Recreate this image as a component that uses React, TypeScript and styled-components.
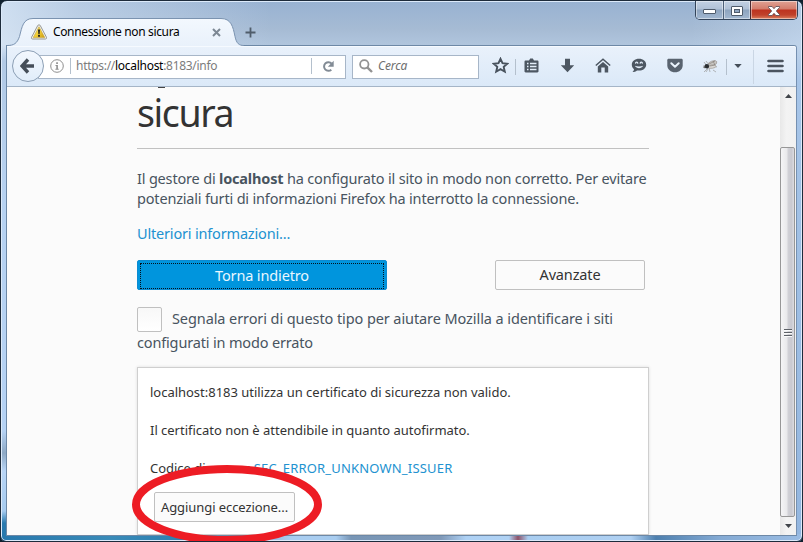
import React from "react";
import styled, { createGlobalStyle } from "styled-components";

const GlobalStyle = createGlobalStyle`
  *, *::before, *::after { box-sizing: border-box; }
  body { margin: 0; overflow: hidden; background: #10202e; font-family: "Noto Sans", "Open Sans", sans-serif; }
  button, p, h1 { margin: 0; padding: 0; font-family: inherit; font-weight: 400; }
  svg { display: block; flex: none; }
`;

const Window = styled.div`
  position: relative;
  width: 803px;
  height: 542px;
  display: flex;
  flex-direction: column;
  padding: 0 5px 5px;
  border: 1px solid #1d2b3b;
  border-radius: 7px 7px 6px 6px;
  overflow: hidden;
  box-shadow: inset 0 0 0 1px #dceafa;
  background:
    linear-gradient(90deg, #2878ad 0, #388ab8 110px, #277aad 225px, #7daed6 250px, #a9cdf0 290px, #a9cdf0 335px, #7795b5 350px, #8099b8 440px, #aed1f4 465px, #b0d2f4 508px, #8e5268 517px, #a9cdf0 527px, #afd0f2 630px, #4d7fae 655px, #84aad4 720px, #9abce3 800px) 0 100% / 100% 7px no-repeat,
    linear-gradient(180deg, transparent 0, transparent 44px, #b2cae6 60px, #b7d2f1 200px, #b5d2f4 430px, #8ea9c5 452px, #b8d5f6 470px, #a6cbef 510px, #297aaf 522px, #2878ad 100%) 0 0 / 6px 100% no-repeat,
    linear-gradient(180deg, transparent 0, transparent 44px, #a7c5e8 80px, #93b6df 100%) 100% 0 / 6px 100% no-repeat,
    linear-gradient(90deg, rgba(224, 237, 251, 0.75) 0, rgba(220, 234, 249, 0.45) 80px, transparent 270px, transparent 690px, rgba(210, 229, 250, 0.45) 800px),
    linear-gradient(180deg, #98b2d2 0, #a6bbd4 28px, #b0c5dd 44px, #b0c5dd 100%);
`;

const TitleBar = styled.div`
  display: flex;
  height: 44px;
  flex: none;
  justify-content: space-between;
  align-items: flex-start;
  padding-left: 1px;
`;

const TabStrip = styled.div`
  display: flex;
  padding-top: 17px;
`;

const Tab = styled.div`
  position: relative;
  display: flex;
  align-items: center;
  width: 238px;
  height: 28px;
  padding: 0 0 0 24px;
`;

const TabShape = styled.svg`
  position: absolute;
  left: 0;
  top: 0;
`;

const TabTitle = styled.span`
  position: relative;
  width: 159px;
  margin-left: 6px;
  font-size: 12px;
  letter-spacing: -0.36px;
  line-height: 20px;
  white-space: nowrap;
  color: #000;
`;

const Lifted = styled.span`
  position: relative;
  display: flex;
`;

const NewTab = styled.div`
  padding: 9px 0 0 0;
`;

const WindowButtons = styled.div`
  display: flex;
  height: 19px;
  margin-right: -1px;
  border: 1px solid #33445a;
  border-top: 0;
  border-radius: 0 0 5px 5px;
  overflow: hidden;
`;

const WindowButton = styled.div<{ $close?: boolean }>`
  display: flex;
  align-items: center;
  justify-content: center;
  width: ${(p) => (p.$close ? 47 : 27)}px;
  padding-top: 1px;
  border-left: 1px solid ${(p) => (p.$close ? "#4b2a30" : "#4d6078")};
  box-shadow: inset 0 0 0 1px rgba(255, 255, 255, 0.45);
  background: ${(p) =>
    p.$close
      ? "linear-gradient(180deg, #e0a294 0, #d37c6b 8px, #bd3320 9px, #c0422b 14px, #dd8261 100%)"
      : "linear-gradient(180deg, #c3d1e3 0, #b0c1d6 8px, #8da4bf 9px, #a3b8d1 100%)"};
  &:first-child { border-left: 0; padding-top: 4px; }
`;

const Browser = styled.div`
  display: flex;
  flex-direction: column;
  flex: 1;
  min-height: 0;
  border: 1px solid #6d88a6;
  border-right-color: #7590b1;
  border-top-right-radius: 3px;
  background: #fbfbfb;
`;

const Toolbar = styled.div`
  display: flex;
  align-items: center;
  height: 41px;
  flex: none;
  padding-left: 5px;
  border-top: 1px solid #f6faff;
  border-bottom: 1px solid #a5b5c7;
  border-top-right-radius: 3px;
  background: linear-gradient(180deg, #e9f1fb 0, #dbe9f8 100%);
`;

const BackButton = styled.div`
  position: relative;
  display: flex;
  align-items: center;
  justify-content: center;
  width: 32px;
  height: 32px;
  flex: none;
  margin-bottom: 2px;
  padding-right: 1px;
  border: 1px solid #8c9fb5;
  border-radius: 50%;
  background: linear-gradient(180deg, #f3f8fe, #e1edfa);
`;

const Field = styled.div<{ $width: number; $joined?: boolean }>`
  display: flex;
  align-items: center;
  width: ${(p) => p.$width}px;
  height: 24px;
  flex: none;
  margin-left: ${(p) => (p.$joined ? -6 : 6)}px;
  padding: 0 0 1px ${(p) => (p.$joined ? 11 : 6)}px;
  border: 1px solid #a7b6c8;
  background: #fff;
`;

const Divider = styled.div<{ $height: number; $left?: number; $right?: number; $soft?: boolean }>`
  width: 1px;
  flex: none;
  height: ${(p) => p.$height}px;
  margin-left: ${(p) => p.$left ?? 0}px;
  margin-right: ${(p) => p.$right ?? 0}px;
  background: ${(p) => (p.$soft ? "#cad6e4" : "#b4c0cd")};
`;

const Address = styled.span`
  flex: 1;
  font-size: 12px;
  line-height: 20px;
  letter-spacing: -0.29px;
  white-space: nowrap;
  color: #7c7c7c;
  b { font-weight: 400; color: #000; }
`;

const Placeholder = styled.span`
  margin-left: 5px;
  font-size: 12px;
  line-height: 20px;
  font-style: italic;
  letter-spacing: -0.1px;
  color: #6e6e6e;
`;

const Tool = styled.div<{ $width?: number }>`
  display: flex;
  align-items: center;
  justify-content: center;
  flex: none;
  width: ${(p) => p.$width ?? 36}px;
  padding-bottom: 2px;
`;

const Viewport = styled.div`
  display: flex;
  flex: 1;
  min-height: 0;
`;

const Page = styled.main`
  width: 773px;
  padding: 0 131px 0 130px;
  overflow: hidden;
  background: #fbfbfb;
`;

const Heading = styled.h1`
  position: relative;
  height: 62px;
  border-bottom: 1px solid #c1c1c1;
  font-size: 37.5px;
  line-height: 52px;
  letter-spacing: -1.4px;
  color: #333;
  &::before {
    content: "";
    position: absolute;
    left: 21px;
    top: 0;
    width: 7px;
    height: 1px;
    background: #444;
  }
`;

const Message = styled.p<{ $top: number }>`
  margin-top: ${(p) => p.$top}px;
  font-size: 14.5px;
  line-height: 20px;
  letter-spacing: -0.18px;
  white-space: nowrap;
  color: #48545f;
`;

const Link = styled.a`
  color: #2292d0;
`;

const Actions = styled.div`
  display: flex;
  width: 508px;
  margin-top: 17px;
  justify-content: space-between;
`;

const ActionButton = styled.button<{ $primary?: boolean }>`
  width: ${(p) => (p.$primary ? 250 : 150)}px;
  height: 30px;
  padding: ${(p) => (p.$primary ? "2px" : "0 0 2px")};
  border: ${(p) => (p.$primary ? "1px solid #0a8bd2" : "1px solid #c0c0c0")};
  border-radius: 2px;
  background: ${(p) => (p.$primary ? "#0095dd" : "#fbfbfb")};
  color: ${(p) => (p.$primary ? "#e8f7ff" : "#333")};
  font-size: 14.5px;
  line-height: 22px;
  letter-spacing: -0.14px;
  span {
    display: block;
    padding-bottom: ${(p) => (p.$primary ? 2 : 0)}px;
    border: ${(p) => (p.$primary ? "1px dotted #04121c" : "0")};
  }
`;

const Report = styled.label`
  display: block;
  margin-top: 16px;
  font-size: 14.5px;
  line-height: 24px;
  letter-spacing: -0.16px;
  white-space: nowrap;
  color: #48545f;
`;

const ReportRow = styled.span`
  display: flex;
  height: 24px;
  letter-spacing: -0.09px;
`;

const Checkbox = styled.span`
  width: 25px;
  height: 25px;
  flex: none;
  margin: 1px 10px 0 0;
  border: 1px solid #c0c0c0;
  border-radius: 2px;
  background: linear-gradient(180deg, #f8f8f8, #fff);
`;

const Card = styled.section`
  width: 512px;
  height: 168px;
  margin-top: 13px;
  padding: 14px 12px 0;
  border: 1px solid #cfcfcf;
  background: #fff;
  box-shadow: 0 0 3px rgba(0, 0, 0, 0.12);
  color: #333;
`;

const Detail = styled.p<{ $last?: boolean }>`
  height: ${(p) => (p.$last ? 34 : 38)}px;
  font-size: 13px;
  line-height: 20px;
  letter-spacing: -0.02px;
  white-space: nowrap;
  a { letter-spacing: 0.18px; }
`;

const ExceptionButton = styled.button`
  width: 141px;
  height: 30px;
  margin-left: 4px;
  border: 1px solid #c0c0c0;
  border-radius: 2px;
  background: #fbfbfb;
  color: #333;
  font-size: 13px;
  line-height: 28px;
  letter-spacing: -0.07px;
  white-space: nowrap;
`;

const Scrollbar = styled.div`
  display: flex;
  flex-direction: column;
  width: 16px;
  flex: none;
  background: linear-gradient(90deg, #e8e8e8, #f3f3f3 40%, #f1f1f1);
`;

const ArrowSlot = styled.div<{ $height: number }>`
  display: flex;
  height: ${(p) => p.$height}px;
  flex: none;
  align-items: flex-start;
  justify-content: center;
  padding-top: 7px;
`;

const Thumb = styled.div`
  display: flex;
  align-items: center;
  justify-content: center;
  height: 370px;
  width: 15px;
  flex: none;
  border: 1px solid #979797;
  border-radius: 2px;
  background: linear-gradient(90deg, #f5f5f6 0, #e9e9eb 45%, #d1d1d6 55%, #c9c9d0 80%, #dcdce1 100%);
`;

const Highlight = styled.svg`
  position: absolute;
  left: 130px;
  top: 460px;
`;

const ink = "#4d5762";

const Fly = () => (
  <svg width="18" height="16" viewBox="0 0 18 16">
    <path d="M3 4l3 4M2 8h4M3 14l4-4M9 14l-1-4M12 12l3 2M13 8l3 1M5 3l3 4M7 11l-2 3" stroke="#9a9a9a" strokeWidth=".7" />
    <ellipse cx="11.5" cy="5.3" rx="4.600" ry="2.300" transform="rotate(-20 11.5 5.3)" fill="#cbc9c6" stroke="#98938e" strokeWidth=".6" />
    <ellipse cx="11" cy="8.6" rx="4.200" ry="1.700" transform="rotate(-8 11 8.6)" fill="#dad8d5" stroke="#96918c" strokeWidth=".6" />
    <path d="M8 6l6-3M9 8l5-1M12 3l2 4" stroke="#7d7771" strokeWidth=".6" />
    <circle cx="5.8" cy="8.3" r="2.300" fill="#292d31" />
    <circle cx="3.4" cy="9.3" r="1" fill="#666" />
  </svg>
);

const Arrow = ({ down }: { down?: boolean }) => (
  <svg width="7" height="4" viewBox="0 0 7 4">
    <path d={down ? "M0 0h7L3.500 4z" : "M0 4h7L3.500 0z"} fill="#404449" />
  </svg>
);

export default function App() {
  return (
    <>
      <GlobalStyle />
      <Window>
        <TitleBar>
          <TabStrip>
            <Tab>
              <TabShape width="240" height="28" viewBox="0 0 240 28">
                <defs>
                  <linearGradient id="tabFill" x1="0" y1="0" x2="0" y2="1">
                    <stop offset="0" stopColor="#f3f8fe" />
                    <stop offset="1" stopColor="#e9f1fb" />
                  </linearGradient>
                </defs>
                <path
                  d="M0 27.5c7 0 10-2 12.500-9C15 9 16 .5 26 .5H214c10 0 12 8 14 18 1.500 7 4 9 9 9V28H0z"
                  fill="url(#tabFill)"
                />
                <path d="M0 27.500c7 0 10-2 12.500-9C15 9 16 .5 26 .5H214c10 0 12 8 14 18 1.500 7 4 9 9 9" fill="none" stroke="#7b93b0" />
              </TabShape>
              <Lifted>
                <svg width="16" height="16" viewBox="0 0 16 16">
                  <defs>
                    <linearGradient id="warn" x1="0" y1="0" x2="1" y2="1">
                      <stop offset="0" stopColor="#fff39a" />
                      <stop offset=".5" stopColor="#f2cf35" />
                      <stop offset="1" stopColor="#c99a10" />
                    </linearGradient>
                  </defs>
                  <path d="M8 .8c.7 0 1.100.4 1.400 1l6 11.400c.5 1 0 1.800-1 1.800H1.600c-1 0-1.500-.8-1-1.800l6-11.400c.3-.6.7-1 1.400-1z" fill="#f4f4f0" stroke="#8b8b85" strokeWidth=".9" />
                  <path d="M8 2.700L13.800 13.600H2.200z" fill="url(#warn)" stroke="#c3a032" strokeWidth=".6" />
                  <path d="M7 5.500h2l-.4 4.700H7.400zM7.100 11h1.800v1.700H7.100z" fill="#1d1d1d" />
                </svg>
              </Lifted>
              <TabTitle>Connessione non sicura</TabTitle>
              <Lifted>
                <svg width="9" height="9" viewBox="0 0 9 9">
                  <path d="M1 1l7 7M8 1L1 8" stroke="#7d8894" strokeWidth="2" />
                </svg>
              </Lifted>
            </Tab>
            <NewTab>
              <svg width="11" height="11" viewBox="0 0 11 11">
                <path d="M5.500 .5v10M.5 5.500h10" stroke="#505d6b" strokeWidth="1.800" />
              </svg>
            </NewTab>
          </TabStrip>
          <WindowButtons>
            <WindowButton>
              <svg width="13" height="6" viewBox="0 0 13 6">
                <rect x=".5" y=".5" width="12" height="4" rx=".5" fill="#fff" stroke="#4f5b6b" />
              </svg>
            </WindowButton>
            <WindowButton>
              <svg width="12" height="10" viewBox="0 0 12 10">
                <rect x=".5" y=".5" width="11" height="9" rx=".5" fill="#fff" stroke="#4f5b6b" />
                <rect x="3.500" y="3.500" width="5" height="3" fill="#90a5c0" stroke="#4f5b6b" />
              </svg>
            </WindowButton>
            <WindowButton $close>
              <svg width="12" height="10" viewBox="0 0 12 10">
                <path d="M.5.5h3.600L6 2.700 7.900.5h3.600v1L8.300 5l3.200 3.500v1H7.900L6 7.300 4.100 9.500H.5v-1L3.700 5 .5 1.500z" fill="#fff" stroke="#56464f" strokeWidth=".8" />
              </svg>
            </WindowButton>
          </WindowButtons>
        </TitleBar>

        <Browser>
          <Toolbar>
            <BackButton>
              <svg width="15" height="16" viewBox="0 0 15 16">
                <path d="M8 1.500L2 8l6 6.500M2.500 8H14" fill="none" stroke="#454e59" strokeWidth="3.400" />
              </svg>
            </BackButton>
            <Field $width={308} $joined>
              <svg width="14" height="14" viewBox="0 0 14 14">
                <circle cx="7" cy="7" r="6.300" fill="none" stroke="#8f8f8f" />
                <path d="M6.200 3.300h1.700v1.600H6.200zM5.500 6h2.400v3.700h.8v1H5.400v-1h.9V7h-.8z" fill="#8f8f8f" />
              </svg>
              <Divider $height={16} $left={6} $right={5} />
              <Address>
                https://<b>localhost</b>:8183/info
              </Address>
              <Divider $height={16} $right={10} />
              <svg width="13" height="13" viewBox="0 0 13 13">
                <path d="M9.300 9.700A4.300 4.300 0 1 1 9.600 3.700" fill="none" stroke="#828b95" strokeWidth="2" />
                <path d="M11.700.7v6H5.800z" fill="#828b95" />
              </svg>
              <Tool $width={10} />
            </Field>
            <Field $width={127}>
              <svg width="14" height="14" viewBox="0 0 14 14">
                <circle cx="5.300" cy="5.300" r="4.200" fill="none" stroke="#929292" strokeWidth="1.800" />
                <path d="M8.300 8.300l4.700 4.700" stroke="#929292" strokeWidth="2.400" />
              </svg>
              <Placeholder>Cerca</Placeholder>
            </Field>
            <Tool $width={42}>
              <svg width="17" height="17" viewBox="0 0 17 17">
                <path d="M8.500 1.800l2 4.400 4.800.5-3.600 3.200 1.100 4.800-4.300-2.500-4.300 2.500 1.100-4.800L1.700 6.700l4.800-.5z" fill="none" stroke="#48525d" strokeWidth="1.900" />
              </svg>
            </Tool>
            <Divider $height={16} $left={-6} $right={-3} />
            <Tool>
              <svg width="15" height="15" viewBox="0 0 15 15">
                <path d="M5 2.500L6.200.5h2.600L10 2.500h3.300c.8 0 1.200.5 1.200 1.200v9.600c0 .7-.4 1.200-1.200 1.200H1.700c-.8 0-1.200-.5-1.200-1.200V3.700c0-.7.4-1.200 1.200-1.200z" fill={ink} />
                <path d="M3 5.500h1.500M3 8.500h1.500M3 11.500h1.500M6 5.500h6.500M6 8.500h6.500M6 11.500h6.500" stroke="#e3edf9" strokeWidth="1.700" />
              </svg>
            </Tool>
            <Tool>
              <svg width="15" height="15" viewBox="0 0 15 15">
                <path d="M5 .8h5v6.400h4.200L7.500 14.300.8 7.200H5z" fill={ink} />
              </svg>
            </Tool>
            <Tool>
              <svg width="16" height="15" viewBox="0 0 16 15">
                <path d="M.8 7.500L8 1.200l7.200 6.300" fill="none" stroke={ink} strokeWidth="1.500" />
                <path d="M2.800 8.500L8 4 13.200 8.500v6H9.700V9.500H6.300v5H2.800z" fill={ink} />
              </svg>
            </Tool>
            <Tool>
              <svg width="16" height="15" viewBox="0 0 16 15">
                <path d="M8 .8c4.100 0 7.200 2.500 7.200 5.900S12.100 12.600 8 12.600c-.7 0-1.400-.1-2-.2-1.200 1-2.800 1.700-4.600 1.700 1-.8 1.500-1.700 1.600-2.900C1.600 10 .8 8.500.8 6.700.8 3.300 3.900.8 8 .8z" fill={ink} />
                <path d="M3.800 7.800c1.800 3.300 6.600 3.300 8.400 0-2.300.8-6.100.8-8.400 0z" fill="#e3edf9" />
                <path d="M4.500 5.600c.1-2 2.200-2 2.400 0M9.100 5.600c.1-2 2.200-2 2.400 0" fill="none" stroke="#e3edf9" strokeWidth="1.300" />
              </svg>
            </Tool>
            <Tool>
              <svg width="16" height="15" viewBox="0 0 16 15">
                <path d="M1.700.8h12.600c.9 0 1.400.6 1.400 1.400v5c0 4.200-3.500 7.100-7.700 7.100S.3 11.400.3 7.200v-5C.3 1.400.8.8 1.700.8z" fill="#59636f" />
                <path d="M4.300 5.200L8 8.700l3.700-3.500" fill="none" stroke="#eaf3fc" strokeWidth="2" strokeLinecap="round" strokeLinejoin="round" />
              </svg>
            </Tool>
            <Tool $width={34}>
              <Fly />
            </Tool>
            <Divider $height={16} $left={-1} />
            <Tool $width={22}>
              <svg width="8" height="4" viewBox="0 0 8 4">
                <path d="M.3 0h7.400L4 4z" fill="#454e59" />
              </svg>
            </Tool>
            <Tool $width={4} />
            <Divider $height={34} $soft />
            <Tool $width={42}>
              <svg width="17" height="14" viewBox="0 0 17 14">
                <path d="M1.500 2h14M1.500 7h14M1.500 12h14" stroke="#4b545f" strokeWidth="2.600" strokeLinecap="round" />
              </svg>
            </Tool>
          </Toolbar>

          <Viewport>
            <Page>
              <Heading>sicura</Heading>
              <Message $top={19}>
                Il gestore di <b>localhost</b> ha configurato il sito in modo non corretto. Per evitare
                <br />
                potenziali furti di informazioni Firefox ha interrotto la connessione.
              </Message>
              <Message $top={15}>
                <Link>Ulteriori informazioni...</Link>
              </Message>
              <Actions>
                <ActionButton $primary>
                  <span>Torna indietro</span>
                </ActionButton>
                <ActionButton>
                  <span>Avanzate</span>
                </ActionButton>
              </Actions>
              <Report>
                <ReportRow>
                  <Checkbox />
                  Segnala errori di questo tipo per aiutare Mozilla a identificare i siti
                </ReportRow>
                configurati in modo errato
              </Report>
              <Card>
                <Detail>localhost:8183 utilizza un certificato di sicurezza non valido.</Detail>
                <Detail>Il certificato non è attendibile in quanto autofirmato.</Detail>
                <Detail $last>
                  Codice di errore: <Link>SEC_ERROR_UNKNOWN_ISSUER</Link>
                </Detail>
                <ExceptionButton>Aggiungi eccezione...</ExceptionButton>
              </Card>
            </Page>
            <Scrollbar>
              <ArrowSlot $height={60}>
                <Arrow />
              </ArrowSlot>
              <Thumb>
                <svg width="8" height="9" viewBox="0 0 8 9">
                  <path d="M0 1.500h8M0 4.500h8M0 7.500h8" stroke="#5e6268" />
                  <path d="M0 2.500h8M0 5.500h8M0 8.500h8" stroke="#fafafa" />
                </svg>
              </Thumb>
              <ArrowSlot $height={18}>
                <Arrow down />
              </ArrowSlot>
            </Scrollbar>
          </Viewport>
        </Browser>

        <Highlight width="194" height="88" viewBox="0 0 194 88">
          <ellipse cx="96" cy="43.500" rx="91" ry="35.500" fill="none" stroke="#ed1c24" strokeWidth="8" />
        </Highlight>
      </Window>
    </>
  );
}
